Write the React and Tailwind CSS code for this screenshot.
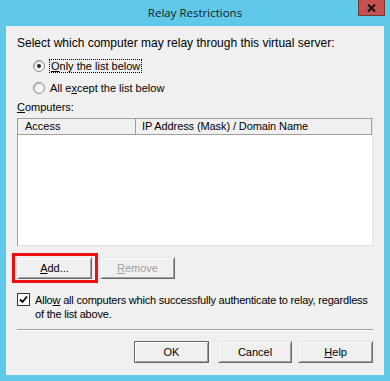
import React from "react";

const font = { fontFamily: '"Liberation Sans", Arial, sans-serif' };

function Btn({ children, className = "", disabled = false, def = false }) {
  return (
    <div
      className={
        "h-[22px] w-[75px] flex items-center justify-center text-[11px] bg-[#f0f0f0] " +
        (def
          ? "border border-[#646464] shadow-[inset_1px_1px_0_#ffffff,inset_-1px_-1px_0_#a0a0a0] "
          : "border border-t-[#e3e3e3] border-l-[#e3e3e3] border-b-[#696969] border-r-[#696969] shadow-[inset_1px_1px_0_#ffffff,inset_-1px_-1px_0_#a0a0a0] ") +
        (disabled ? "text-[#a0a0a0] " : "text-black ") +
        className
      }
    >
      {children}
    </div>
  );
}

function Radio({ checked }) {
  return (
    <div className="w-[12px] h-[12px] rounded-full border border-[#8e8f8f] bg-[#f4f4f4] flex items-center justify-center shrink-0 shadow-[inset_1px_1px_1px_#c9c9c9]">
      {checked && <div className="w-[4px] h-[4px] rounded-full bg-[#222]" />}
    </div>
  );
}

export default function App() {
  return (
    <div className="w-[390px] h-[381px] bg-[#60c9ea] flex flex-col" style={font}>
      <div className="h-[26px] relative flex items-center justify-center shrink-0">
        <span className="text-[11.5px] text-[#1a1a1a] pb-[1px]" style={{ fontFamily: '"Open Sans", "Noto Sans", sans-serif' }}>
          Relay Restrictions
        </span>
        <div className="absolute right-[5px] top-0 w-[27px] h-[16px] bg-[#c75050] border border-t-0 border-[#6d3a3a] flex items-center justify-center">
          <svg width="9" height="8" viewBox="0 0 9 8">
            <path d="M1 0.5 L8 7.5 M8 0.5 L1 7.5" stroke="#111" strokeWidth="2" />
          </svg>
        </div>
      </div>
      <div className="ml-[6px] w-[378px] h-[349px] bg-[#f0f0f0] pl-[11px] pr-[11px] pt-[11px] text-[11px] text-black flex flex-col">
        <div className="leading-[13px] text-[12px] whitespace-nowrap">Select which computer may relay through this virtual server:</div>
        <div className="mt-[9px] ml-[16px] h-[14px] flex items-center">
          <Radio checked />
          <div className="ml-[4px] px-[1px] h-[14px] leading-[12px] border border-dotted border-black flex items-center">
            <span><u>O</u>nly the list below</span>
          </div>
        </div>
        <div className="mt-[8px] ml-[16px] h-[14px] flex items-center">
          <Radio />
          <div className="ml-[5px] leading-[13px]">
            All e<u>x</u>cept the list below
          </div>
        </div>
        <div className="mt-[6px] leading-[13px]">
          <u>C</u>omputers:
        </div>
        <div className="mt-[4px] w-[356px] h-[128px] bg-white border border-[#a0a0a0] border-b-[#e3e3e3] border-r-[#e3e3e3] flex flex-col">
          <div className="h-[16px] flex bg-[#f0f0f0] border-b border-[#a0a0a0] shrink-0">
            <div className="w-[118px] border-r border-[#a0a0a0] pl-[7px] leading-[15px]">Access</div>
            <div className="flex-1 pl-[6px] leading-[15px] border-r border-[#a0a0a0] tracking-[-0.1px]">IP Address (Mask) / Domain Name</div>
          </div>
        </div>
        <div className="mt-[11px] flex">
          <div className="relative">
            <Btn>
              <span><u>A</u>dd...</span>
            </Btn>
            <div className="absolute -left-[5px] -right-[6px] -top-[4px] -bottom-[4px] border-[3px] border-[#ee1111]" />
          </div>
          <Btn disabled className="ml-[8px] w-[73px]">
            <span><u>R</u>emove</span>
          </Btn>
        </div>
        <div className="mt-[14px] flex">
          <div className="w-[13px] h-[13px] border border-[#333] bg-white flex items-center justify-center shrink-0">
            <svg width="9" height="9" viewBox="0 0 9 9">
              <path d="M1 4.5 L3.5 7 L8 1.5" stroke="#000" strokeWidth="1.8" fill="none" />
            </svg>
          </div>
          <div className="ml-[5px] leading-[14px] whitespace-nowrap tracking-[-0.2px]">
            Allo<u>w</u> all computers which successfully authenticate to relay, regardless
            <br />
            of the list above.
          </div>
        </div>
        <div className="mt-[8px] w-[356px] h-[2px] border-t border-[#a0a0a0] border-b border-b-white" />
        <div className="mt-[10px] flex">
          <Btn def className="ml-[117px]">OK</Btn>
          <Btn className="ml-[9px]">Cancel</Btn>
          <Btn className="ml-[6px] w-[74px]">
            <span><u>H</u>elp</span>
          </Btn>
        </div>
      </div>
    </div>
  );
}
